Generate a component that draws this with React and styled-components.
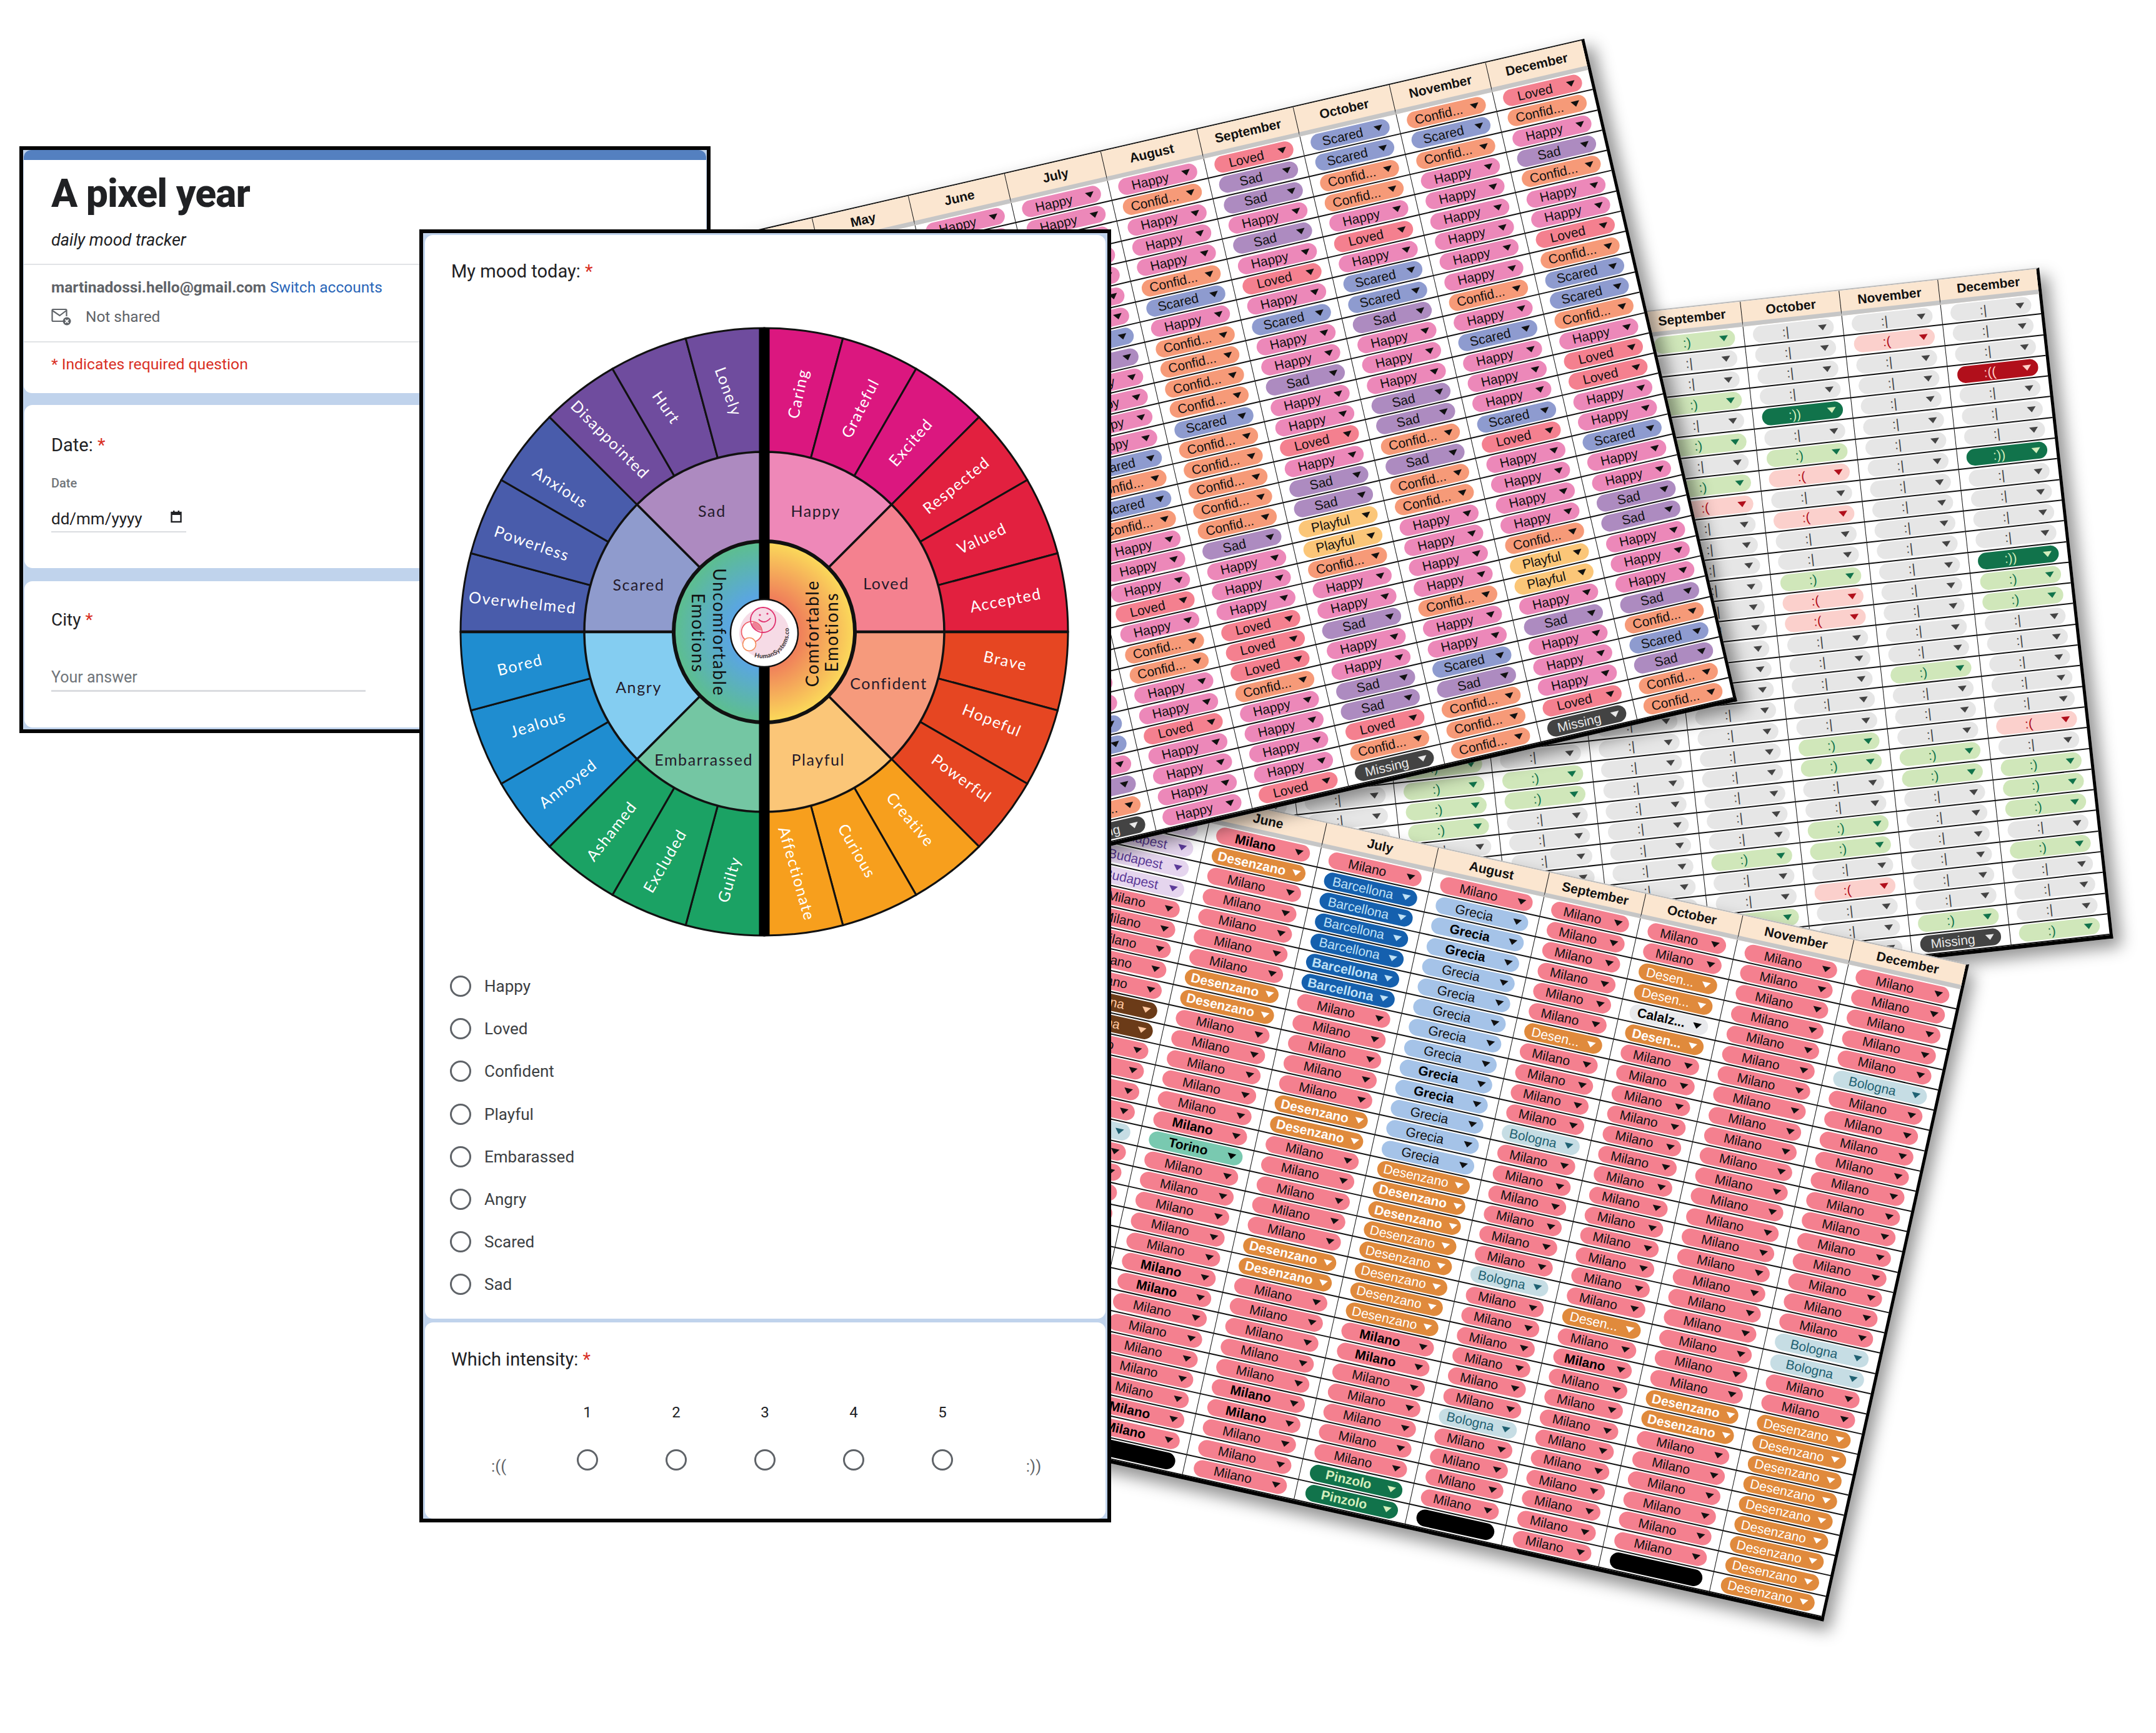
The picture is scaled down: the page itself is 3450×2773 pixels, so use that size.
import React from 'react'
import styled, { createGlobalStyle } from 'styled-components'

const GlobalStyle = createGlobalStyle`
  html, body { margin: 0; padding: 0; background: #fff; }
  body { width: 3450px; height: 2773px; overflow: hidden; font-family: Roboto, "Liberation Sans", sans-serif; }
`

const Canvas = styled.div`
  position: relative;
  width: 3450px;
  height: 2773px;
  overflow: hidden;
  background: #fff;
`

/* ---------- spreadsheets ---------- */

const Sheet = styled.div`
  position: absolute;
  left: ${p => p.$x - p.$width}px;
  top: ${p => p.$y}px;
  z-index: ${p => p.$z};
  width: ${p => p.$width}px;
  box-sizing: border-box;
  display: grid;
  grid-template-columns: ${p => p.$cols};
  grid-template-rows: ${p => p.$header}px;
  grid-auto-rows: ${p => p.$row}px;
  background: #fff;
  border-top: 2px solid ${p => p.$edge};
  border-right: 5px solid #000;
  border-bottom: 6px solid #000;
  transform-origin: top right;
  transform: rotate(${p => p.$angle}deg);
  box-shadow: 12px 14px 26px rgba(0, 0, 0, 0.42);
  font-family: "Liberation Sans", Arial, sans-serif;
`

const MonthCell = styled.div`
  box-sizing: border-box;
  display: flex;
  align-items: center;
  justify-content: center;
  background: #fbe6d0;
  border-left: 1.5px solid #111;
  border-bottom: 7px solid #c6c6c6;
  color: #111;
  font-size: 21px;
  font-weight: 700;
`

const Cell = styled.div`
  box-sizing: border-box;
  display: flex;
  align-items: center;
  justify-content: center;
  border-left: 1.5px solid #111;
  border-bottom: 2px solid #111;
`

const Pill = styled.div`
  box-sizing: border-box;
  width: calc(100% - ${p => p.$inset}px);
  height: 27px;
  display: flex;
  align-items: center;
  padding: 0 11px 0 10px;
  border-radius: 14px;
  background: ${p => p.$bg};
  color: ${p => p.$fg};
  font-size: 21px;
  font-weight: ${p => (p.$bold ? 700 : 400)};
`

const PillText = styled.span`
  flex: 1;
  margin-right: 10px;
  text-align: center;
  white-space: nowrap;
`

const Arrow = styled.span`
  width: 0;
  height: 0;
  border-left: 7px solid transparent;
  border-right: 7px solid transparent;
  border-top: 9px solid ${p => p.$color};
`

const MOOD = {
  H: { text: 'Happy', bg: '#ec88b9', fg: '#111', arrow: '#111' },
  L: { text: 'Loved', bg: '#f4808f', fg: '#111', arrow: '#111' },
  C: { text: 'Confid...', bg: '#f69a78', fg: '#111', arrow: '#111' },
  S: { text: 'Scared', bg: '#8e9bcf', fg: '#111', arrow: '#111' },
  D: { text: 'Sad', bg: '#ad8bc0', fg: '#111', arrow: '#111' },
  P: { text: 'Playful', bg: '#fbc678', fg: '#111', arrow: '#111' },
  M: { text: 'Missing', bg: '#434343', fg: '#e8e8e8', arrow: '#e8e8e8' },
}

const INTENSITY = {
  n: { text: ':|', bg: '#e6e6e6', fg: '#444', arrow: '#444' },
  g: { text: ':)', bg: '#d0e7ba', fg: '#11734b', arrow: '#11734b' },
  r: { text: ':(', bg: '#fbd0cc', fg: '#b10f1b', arrow: '#b10f1b' },
  G: { text: ':))', bg: '#11734b', fg: '#d4edbc', arrow: '#d4edbc' },
  R: { text: ':((', bg: '#b10f1b', fg: '#ffcfc9', arrow: '#ffcfc9' },
  M: { text: 'Missing', bg: '#434343', fg: '#e8e8e8', arrow: '#e8e8e8' },
}

const CITY = {
  M: { text: 'Milano', bg: '#f4808f', fg: '#111', arrow: '#111' },
  m: { text: 'Milano', bg: '#f4808f', fg: '#000', arrow: '#111', bold: true },
  D: { text: 'Desenzano', bg: '#e08a3c', fg: '#fff', arrow: '#fff' },
  d: { text: 'Desenzano', bg: '#e08a3c', fg: '#fff', arrow: '#fff', bold: true },
  E: { text: 'Desen...', bg: '#e08a3c', fg: '#fff', arrow: '#fff' },
  e: { text: 'Desen...', bg: '#e08a3c', fg: '#fff', arrow: '#fff', bold: true },
  B: { text: 'Barcellona', bg: '#1560ae', fg: '#bfe1f6', arrow: '#bfe1f6' },
  b: { text: 'Barcellona', bg: '#1560ae', fg: '#bfe1f6', arrow: '#bfe1f6', bold: true },
  G: { text: 'Grecia', bg: '#a5c3e8', fg: '#111', arrow: '#111' },
  g: { text: 'Grecia', bg: '#a5c3e8', fg: '#000', arrow: '#111', bold: true },
  O: { text: 'Bologna', bg: '#c6dde4', fg: '#1f6172', arrow: '#1f6172' },
  T: { text: 'Torino', bg: '#79c9b0', fg: '#000', arrow: '#000', bold: true },
  P: { text: 'Pinzolo', bg: '#11734b', fg: '#d4edbc', arrow: '#d4edbc', bold: true },
  U: { text: 'Budapest', bg: '#e5d5ee', fg: '#5b3a98', arrow: '#5b3a98' },
  W: { text: 'Verona', bg: '#6b3b18', fg: '#ffc8a0', arrow: '#ffc8a0' },
  C: { text: 'Calalz...', bg: '#e8e9ec', fg: '#000', arrow: '#000', bold: true },
  X: { text: '', bg: '#000', fg: '#000', arrow: '#000' },
}

const MONTHS = ['January', 'February', 'March', 'April', 'May', 'June', 'July', 'August', 'September', 'October', 'November', 'December']

// "H3 L" means three Happy then one Loved
const expand = str =>
  str.split(' ').flatMap(tok => Array(Number(tok.slice(1)) || 1).fill(tok[0]))

const moodColumns = [
  'H31', 'H31', 'H31', 'H31', 'H31',
  'H6 S H C2 S D H3 L H2 C H C H4 S2 H D C M',
  'H7 S D H4 S C S C H3 L H C2 H2 L H4',
  'H C H3 C S H C4 S C5 D H3 L3 C H4 L',
  'L D2 H D H L H S H2 D H2 L H D2 P2 C H2 D H2 D2 L C M',
  'S2 C2 H L H S2 D H3 D2 C D C2 H4 C H2 S D C3',
  'C S C H6 C H S H3 S L H4 C P2 H D H3 L M',
  'L C H D C H2 L C S2 C H L2 H2 S H2 D2 H3 D C S D C2',
]

const intensityColumns = [
  'n31', 'n31', 'n31', 'n31', 'n31',
  'n19 g4 n8',
  'n20 g2 n9',
  'n31',
  'g n2 g n g n g r n16 g n2 g n M',
  'n4 G n g r n r n2 g r2 n5 g2 n2 g2 n r n3',
  'n r n15 g n3 g2 n6 g M',
  'n3 R n3 G n4 G g2 n5 r n g3 n g n3 g',
]

const cityColumns = [
  'M31', 'M31', 'M31', 'M31',
  'U4 M5 W2 M4 O M15',
  'm d M5 d2 M5 m T M5 m2 M5 m2 X',
  'M B4 b2 M5 d2 M5 d2 M5 m2 M3',
  'M G g2 G5 g2 G3 D d2 D5 m2 M5 P2',
  'M6 E M4 O M6 O M6 O M4 X',
  'M2 E2 C e M13 E M m M9',
  'M22 d2 M6 X',
  'M5 O M12 O2 M2 D9',
]

function Spreadsheet({ columns, kinds, widths, x, y, angle, z, row, header, edge, inset }) {
  const cols = columns.map(expand)
  const width = widths.reduce((a, b) => a + b, 0) + 5
  return (
    <Sheet $x={x} $y={y} $angle={angle} $z={z} $row={row} $header={header} $width={width} $edge={edge}
      $cols={widths.map(w => `${w}px`).join(' ')}>
      {MONTHS.map(m => <MonthCell key={m}>{m}</MonthCell>)}
      {Array.from({ length: 31 }).flatMap((_, r) =>
        cols.map((col, c) => {
          const k = kinds[col[r]]
          return (
            <Cell key={`${r}-${c}`}>
              <Pill $bg={k.bg} $fg={k.fg} $bold={k.bold} $inset={inset}>
                <PillText>{k.text}</PillText>
                <Arrow $color={k.arrow} />
              </Pill>
            </Cell>
          )
        })
      )}
    </Sheet>
  )
}

/* ---------- emotion wheel ---------- */

const WheelFrame = styled.div`
  display: flex;
  justify-content: center;
  margin: 67px 3px 0 0;
`

const WheelSvg = styled.svg`
  display: block;
  width: 980px;
  height: 980px;
`

const WheelText = styled.text`
  font-family: Lato, "Open Sans", sans-serif;
  font-size: ${p => p.$size}px;
  letter-spacing: ${p => p.$spacing}px;
  fill: ${p => p.$color};
  text-anchor: middle;
  dominant-baseline: central;
`

const LogoText = styled.text`
  font-family: Lato, sans-serif;
  font-size: 10px;
  font-weight: 700;
  letter-spacing: 0.3px;
  fill: #333;
`

const OUTER_COLORS = ['#db177f', '#e2203f', '#e64622', '#f79f1d', '#1ba264', '#1f8dd0', '#495cab', '#6f4c9e']
const MID = [
  ['Happy', '#ee88b8', 882, 478],
  ['Loved', '#f4818f', 1052, 652],
  ['Confident', '#f69a7c', 1058, 893],
  ['Playful', '#fbc678', 888, 1078],
  ['Embarrassed', '#74c6a3', 612, 1078],
  ['Angry', '#84cdf1', 455, 902],
  ['Scared', '#8f9bcd', 455, 655],
  ['Sad', '#ad8ac0', 632, 478],
]
const OUTER_LABELS = [
  ['Caring', 838, 195, -78], ['Grateful', 988, 230, -63], ['Excited', 1110, 312, -49],
  ['Respected', 1220, 415, -39], ['Valued', 1282, 543, -25], ['Accepted', 1340, 692, -11],
  ['Brave', 1340, 838, 12], ['Hopeful', 1308, 982, 22], ['Powerful', 1235, 1122, 36],
  ['Creative', 1112, 1222, 50], ['Curious', 983, 1298, 60], ['Affectionate', 838, 1353, 74],
  ['Guilty', 672, 1367, -74], ['Excluded', 517, 1322, -60], ['Ashamed', 388, 1250, -52],
  ['Annoyed', 283, 1135, -38], ['Jealous', 212, 990, -18], ['Bored', 168, 848, -14],
  ['Overwhelmed', 175, 698, 6], ['Powerless', 198, 555, 19], ['Anxious', 267, 420, 33],
  ['Disappointed', 387, 305, 45], ['Hurt', 523, 228, 55], ['Lonely', 673, 190, 70],
]
const HUB_LABELS = [
  ['Uncomfortable', 651, 771, 90], ['Emotions', 600, 773, 90],
  ['Comfortable', 873, 774, -90], ['Emotions', 920, 771, -90],
]

const zx = v => (v - 758) / 1.5077
const zy = v => (v - 770) / 1.5077

const pt = (r, deg) => {
  const a = (deg * Math.PI) / 180
  return [r * Math.sin(a), -r * Math.cos(a)]
}
const wedge = (r, from, to) => {
  const [x1, y1] = pt(r, from)
  const [x2, y2] = pt(r, to)
  return `M0 0L${x1} ${y1}A${r} ${r} 0 0 1 ${x2} ${y2}Z`
}

function Wheel() {
  return (
    <WheelFrame>
      <WheelSvg viewBox="-490 -490 980 980">
        <defs>
          <radialGradient id="warm" cx="0" cy="0" r="146" gradientUnits="userSpaceOnUse">
            <stop offset="0.35" stopColor="#ef7a5a" />
            <stop offset="1" stopColor="#fbdc5a" />
          </radialGradient>
          <radialGradient id="cool" cx="0" cy="0" r="146" gradientUnits="userSpaceOnUse">
            <stop offset="0.4" stopColor="#5aa6e0" />
            <stop offset="1" stopColor="#5dbf8c" />
          </radialGradient>
        </defs>
        {Array.from({ length: 24 }).map((_, i) => (
          <path key={i} d={wedge(486, i * 15, (i + 1) * 15)}
            fill={OUTER_COLORS[Math.floor(i / 3)]} stroke="#111" strokeWidth="3" />
        ))}
        {MID.map(([name, color], i) => (
          <path key={name} d={wedge(288, i * 45, (i + 1) * 45)} fill={color} stroke="#111" strokeWidth="3.5" />
        ))}
        <path d={wedge(145, 0, 180)} fill="url(#warm)" />
        <path d={wedge(145, 180, 360)} fill="url(#cool)" />
        <circle r="145" fill="none" stroke="#111" strokeWidth="6" />
        <line x1="-486" y1="0" x2="-145" y2="0" stroke="#111" strokeWidth="4.5" />
        <line x1="145" y1="0" x2="486" y2="0" stroke="#111" strokeWidth="4.5" />
        <rect x="-8.5" y="-486" width="17" height="972" fill="#000" />

        {OUTER_LABELS.map(([name, x, y, rot]) => (
          <WheelText key={name} $size={25} $spacing={1.6} $color="#fff"
            transform={`translate(${zx(x)} ${zy(y)}) rotate(${rot})`}>{name}</WheelText>
        ))}
        {MID.map(([name, , x, y]) => (
          <WheelText key={name} $size={25} $spacing={1.6} $color="#241a2a"
            transform={`translate(${zx(x)} ${zy(y)})`}>{name}</WheelText>
        ))}
        {HUB_LABELS.map(([name, x, y, rot]) => (
          <WheelText key={name + x} $size={28} $spacing={1.6} $color="#111"
            transform={`translate(${zx(x)} ${zy(y)}) rotate(${rot})`}>{name}</WheelText>
        ))}

        <g transform="translate(0 2)">
          <circle r="54" fill="#fff" stroke="#111" strokeWidth="2.5" />
          <circle cy="0" r="40" fill="#f6dbe6" />
          <circle cx="-20" cy="-2" r="16.5" fill="#fff" stroke="#ee5a64" strokeWidth="1.6" />
          <circle cx="-24" cy="18" r="10.5" fill="#fff" stroke="#f59060" strokeWidth="1.6" />
          <path d="M-16.8 -18 A20 20 0 0 1 -3.6 -4 A16.5 16.5 0 0 1 -21 -14 Z" fill="#ee8298" />
          <circle cx="-2" cy="-21" r="20" fill="none" stroke="#e0306e" strokeWidth="1.8" />
          <circle cx="-7" cy="-29" r="1.6" fill="#e0306e" />
          <circle cx="5" cy="-31" r="1.6" fill="#e0306e" />
          <path d="M-9 -22 Q0 -13 10 -24" fill="none" stroke="#e0306e" strokeWidth="1.8" />
          <path id="logo-arc" d="M-16 38 A42 42 0 0 0 31 -27" fill="none" />
          <LogoText>
            <textPath href="#logo-arc">HumanSystems.co</textPath>
          </LogoText>
        </g>
      </WheelSvg>
    </WheelFrame>
  )
}

/* ---------- forms ---------- */

const Frame = styled.div`
  position: absolute;
  left: ${p => p.$x}px;
  top: ${p => p.$y}px;
  width: ${p => p.$w}px;
  height: ${p => p.$h}px;
  z-index: ${p => p.$z};
  box-sizing: border-box;
  display: flex;
  flex-direction: column;
  border: 6px solid #050505;
  background: #c0d3ec;
  font-family: Roboto, sans-serif;
`

const Card = styled.div`
  box-sizing: border-box;
  background: #fff;
  border-radius: 13px;
  margin: ${p => p.$margin || '0 2px'};
  height: ${p => p.$height}px;
  padding: ${p => p.$padding || '0 50px'};
`

const TopBand = styled.div`
  height: 16px;
  background: #5480c0;
  border-radius: 12px 12px 0 0;
`

const HeadSection = styled.div`
  padding: ${p => p.$padding};
  border-bottom: ${p => (p.$line ? '2px solid #e1e3e6' : 'none')};
`

const Title = styled.div`
  font-size: 62.5px;
  line-height: 70px;
  font-weight: 800;
  letter-spacing: -1px;
  color: #202124;
`

const Subtitle = styled.div`
  margin-top: 21px;
  font-size: 27px;
  line-height: 36px;
  font-style: italic;
  color: #202124;
`

const AccountLine = styled.div`
  font-size: 24.5px;
  line-height: 30px;
  font-weight: 700;
  color: #5f6368;
`

const SwitchLink = styled.span`
  font-weight: 400;
  color: #2a66b8;
`

const SharedRow = styled.div`
  margin-top: 17px;
  display: flex;
  align-items: center;
  gap: 23px;
  font-size: 24.4px;
  line-height: 30px;
  color: #5f6368;
`

const RequiredNote = styled.div`
  font-size: 24.7px;
  line-height: 30px;
  color: #d93025;
`

const Question = styled.div`
  font-size: ${p => p.$size}px;
  line-height: 40px;
  color: #202124;
`

const Star = styled.span`
  color: #d93025;
`

const SmallLabel = styled.div`
  margin-top: 29px;
  font-size: 20px;
  line-height: 24px;
  font-weight: 500;
  color: #70757a;
`

const DateField = styled.div`
  margin-top: 29px;
  width: 216px;
  height: 38px;
  box-sizing: border-box;
  display: flex;
  justify-content: space-between;
  border-bottom: 2px solid #dadce0;
  padding: 1px 6px 6px 0;
  font-size: 26px;
  line-height: 30px;
  color: #202124;
`

const AnswerField = styled.div`
  margin-top: 57px;
  width: 503px;
  height: 38px;
  box-sizing: border-box;
  border-bottom: 3px solid #dadce0;
  font-size: 25px;
  line-height: 30px;
  color: #70757a;
`

const MoodCard = styled(Card)`
  padding: 38px 42px 0;
  height: 1735px;
`

const RadioList = styled.div`
  margin: 43px 0 0 -2px;
  display: flex;
  flex-direction: column;
`

const RadioRow = styled.div`
  height: 68.2px;
  display: flex;
  align-items: center;
  gap: 21px;
  font-size: 26px;
  color: #3c4043;
`

const Radio = styled.span`
  display: block;
  width: 34px;
  height: 34px;
  box-sizing: border-box;
  border: 3px solid #5f6368;
  border-radius: 50%;
`

const Scale = styled.div`
  margin: 45px 0 0 5px;
  display: grid;
  grid-template-columns: repeat(7, 142px);
  grid-template-rows: 40px 60px;
  row-gap: 26px;
  justify-items: center;
  align-items: center;
  font-size: 24px;
  color: #202124;
`

const ScaleEnd = styled.span`
  padding-top: 20px;
  margin-left: ${p => p.$shift || 0}px;
  font-size: 26px;
  color: #5f6368;
`

const MOODS = ['Happy', 'Loved', 'Confident', 'Playful', 'Embarassed', 'Angry', 'Scared', 'Sad']

function MailOffIcon() {
  return (
    <svg width="32" height="28" viewBox="0 0 32 28" fill="none">
      <path d="M19 21H3a1.5 1.5 0 0 1-1.5-1.5v-16A1.5 1.5 0 0 1 3 2h20a1.5 1.5 0 0 1 1.5 1.5V13" stroke="#5f6368" strokeWidth="2.2" />
      <path d="M2 4l11.5 8L24 4" stroke="#5f6368" strokeWidth="2.2" />
      <circle cx="25" cy="21" r="6.5" fill="#5f6368" />
      <path d="M22.4 18.4l5.2 5.2M27.6 18.4l-5.2 5.2" stroke="#fff" strokeWidth="1.8" />
    </svg>
  )
}

function CalendarIcon() {
  return (
    <svg width="20" height="24" viewBox="0 0 20 24" fill="none">
      <rect x="2.5" y="5" width="15" height="15" stroke="#202124" strokeWidth="2.4" />
      <rect x="2" y="4" width="16" height="5" fill="#202124" />
      <rect x="5" y="2" width="2.4" height="3" fill="#202124" />
      <rect x="12.6" y="2" width="2.4" height="3" fill="#202124" />
    </svg>
  )
}

function HeaderForm() {
  return (
    <Frame $x={31} $y={234} $w={1106} $h={939} $z={5}>
      <Card $height={389} $padding="0" $margin="0 1px">
        <TopBand />
        <HeadSection $line $padding="19px 44px 20px">
          <Title>A pixel year</Title>
          <Subtitle>daily mood tracker</Subtitle>
        </HeadSection>
        <HeadSection $line $padding="21px 44px 24px">
          <AccountLine>martinadossi.hello@gmail.com <SwitchLink>Switch accounts</SwitchLink></AccountLine>
          <SharedRow><MailOffIcon />Not shared</SharedRow>
        </HeadSection>
        <HeadSection $padding="20px 44px 0">
          <RequiredNote>* Indicates required question</RequiredNote>
        </HeadSection>
      </Card>
      <Card $height={261} $margin="19px 2px 0" $padding="44px 43px 0">
        <Question $size={29}>Date: <Star>*</Star></Question>
        <SmallLabel>Date</SmallLabel>
        <DateField>dd/mm/yyyy<CalendarIcon /></DateField>
      </Card>
      <Card $height={234} $margin="21px 2px 0" $padding="42px 43px 0">
        <Question $size={28}>City <Star>*</Star></Question>
        <AnswerField>Your answer</AnswerField>
      </Card>
    </Frame>
  )
}

function MoodForm() {
  return (
    <Frame $x={671} $y={367} $w={1107} $h={2069} $z={6}>
      <MoodCard $margin="3px 3px 0">
        <Question $size={29}>My mood today: <Star>*</Star></Question>
        <Wheel />
        <RadioList>
          {MOODS.map(m => <RadioRow key={m}><Radio />{m}</RadioRow>)}
        </RadioList>
      </MoodCard>
      <Card $height={314} $margin="6px 3px 0" $padding="39px 42px 0">
        <Question $size={29}>Which intensity: <Star>*</Star></Question>
        <Scale>
          <span />
          {[1, 2, 3, 4, 5].map(n => <span key={n}>{n}</span>)}
          <span />
          <ScaleEnd>:((</ScaleEnd>
          {[1, 2, 3, 4, 5].map(n => <Radio key={n} />)}
          <ScaleEnd $shift={8}>:))</ScaleEnd>
        </Scale>
      </Card>
    </Frame>
  )
}

export default function App() {
  return (
    <Canvas>
      <GlobalStyle />
      <Spreadsheet columns={intensityColumns} kinds={INTENSITY} widths={Array(12).fill(159)}
        x={3263} y={428} angle={-6.3} z={1} row={33.3} header={40} edge="#b9b9b9" inset={28} />
      <Spreadsheet columns={cityColumns} kinds={CITY}
        widths={[180, 180, 180, 180, 180, 184, 183, 182, 158, 159, 182, 184]}
        x={3151} y={1543} angle={12.5} z={2} row={33.2} header={40} edge="#b9b9b9" inset={30} />
      <Spreadsheet columns={moodColumns} kinds={MOOD} widths={Array(12).fill(158)}
        x={2535} y={62} angle={-13} z={3} row={33.3} header={48} edge="#111" inset={28} />
      <HeaderForm />
      <MoodForm />
    </Canvas>
  )
}
